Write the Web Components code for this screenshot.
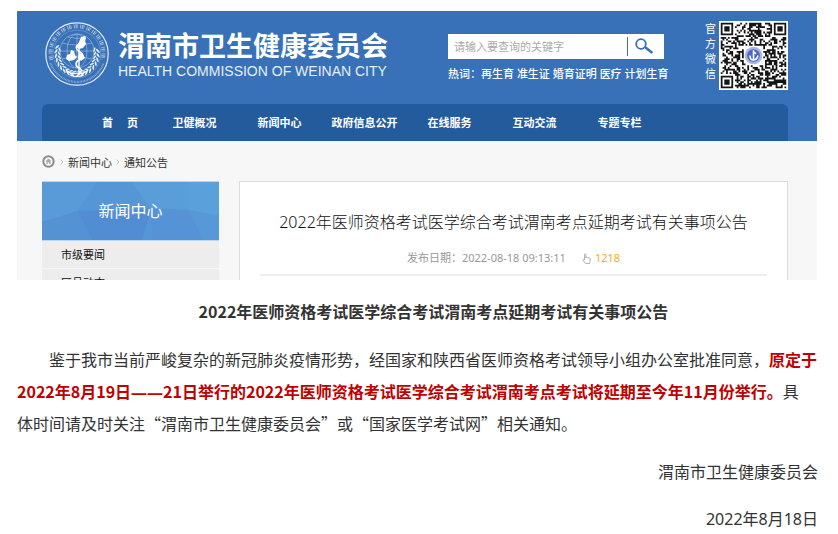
<!DOCTYPE html>
<html lang="zh-CN">
<head>
<meta charset="utf-8">
<title>渭南市卫生健康委员会</title>
<style>
    body {
        margin: 0;
        padding: 11px 20px 0 17px;
        background: #fff;
        color: #333;
        font-family: "Noto Sans CJK SC", sans-serif;
        font-size: 16px;
    }
    .dash {
        font-family: "Noto Sans", sans-serif;
        line-height: 16px;
    }
</style>
</head>
<body>
<site-preview>
    <site-header slot="header">
        <site-brand>
            <span>渭南市卫生健康委员会</span>
            <span slot="sub">HEALTH COMMISSION OF WEINAN CITY</span>
        </site-brand>
        <site-search></site-search>
        <qr-code>官方微信</qr-code>
        <site-nav slot="nav"></site-nav>
    </site-header>
    <bread-crumb></bread-crumb>
    <side-menu slot="side" heading="新闻中心"></side-menu>
    <article-card slot="main">
        2022年医师资格考试医学综合考试渭南考点延期考试有关事项公告
        <span slot="date">发布日期：2022-08-18 09:13:11</span>
        <span slot="hits">1218</span>
    </article-card>
</site-preview>
<notice-article>
    <span slot="title">2022年医师资格考试医学综合考试渭南考点延期考试有关事项公告</span>
    鉴于我市当前严峻复杂的新冠肺炎疫情形势，经国家和陕西省医师资格考试领导小组办公室批准同意，<notice-mark>原定于<br>2022年8月19日<span class="dash">——</span>21日举行的2022年医师资格考试医学综合考试渭南考点考试将延期至今年11月份举行。</notice-mark>具<br>体时间请及时关注“渭南市卫生健康委员会”或“国家医学考试网”相关通知。
    <span slot="org">渭南市卫生健康委员会</span>
    <span slot="date">2022年8月18日</span>
</notice-article>

<script>
class BaseElement extends HTMLElement {
    constructor() {
        super();
        this.attachShadow({ mode: 'open' });
    }

    connectedCallback() {
        this.shadowRoot.innerHTML = this.render();
    }
}

class SitePreview extends BaseElement {
    render() {
        return `
            <style>
                :host {
                    display: block;
                    height: 269px;
                    margin-right: 1px;
                    overflow: hidden;
                    background: #f7f7f7;
                    font-family: "Noto Sans", "Noto Sans CJK SC", sans-serif;
                    font-size: 11px;
                }
                .body {
                    padding: 0 29px 0 25px;
                }
                .columns {
                    display: grid;
                    grid-template-columns: 177px 1fr;
                    gap: 20px;
                }
            </style>
            <slot name="header"></slot>
            <div class="body">
                <slot></slot>
                <div class="columns">
                    <slot name="side"></slot>
                    <slot name="main"></slot>
                </div>
            </div>
        `;
    }
}

class SiteHeader extends BaseElement {
    render() {
        return `
            <style>
                :host {
                    display: block;
                    padding: 0 29px 0 25px;
                    background: #3871b7;
                    color: #fff;
                }
                .top {
                    display: grid;
                    grid-template-columns: 1fr 222px 118px;
                    height: 93px;
                    align-items: start;
                }
            </style>
            <header>
                <div class="top"><slot></slot></div>
                <slot name="nav"></slot>
            </header>
        `;
    }
}

class SiteBrand extends BaseElement {
    // laurel leaves along both sides of the globe
    leaves() {
        let out = '';
        for (let i = 0; i < 9; i++) {
            const deg = 8 + i * 12;
            for (const side of [-1, 1]) {
                out += `<g transform="rotate(${side * deg} 32 32)">
                    <ellipse cx="30" cy="53" rx="2.600" ry=".9" transform="rotate(${side * 30} 30 53)"/>
                    <ellipse cx="32" cy="50" rx="2.400" ry=".8" transform="rotate(${side * -30} 32 50)"/>
                </g>`;
            }
        }
        return out;
    }

    render() {
        return `
            <style>
                :host {
                    display: flex;
                    gap: 9px;
                    padding: 11px 0 0 3px;
                }
                svg {
                    width: 64px;
                    height: 64px;
                    flex: none;
                }
                .name {
                    padding-top: 7px;
                    white-space: nowrap;
                }
                .zh {
                    font-size: 27px;
                    line-height: 34px;
                    font-weight: 700;
                }
                .en {
                    font-family: "Liberation Sans", Arial, sans-serif;
                    font-size: 14px;
                    line-height: 16px;
                    color: #e6eef8;
                }
            </style>
            <svg viewBox="0 0 64 64" fill="none" stroke="#e4edf8" aria-hidden="true">
                <circle cx="32" cy="32" r="31.200" stroke-width="1.200"/>
                <circle cx="32" cy="32" r="23.800" stroke-width=".5" opacity=".5"/>
                <path d="M6.500 38A26.500 26.500 0 1 1 57.500 38" stroke-width="4" stroke-dasharray="1 .8 1.300 .5 .7 2.200" opacity=".6"/>
                <path d="M5.500 41A28 28 0 0 0 58.500 41" stroke-width="2" stroke-dasharray=".8 .7" opacity=".5"/>
                <g stroke-width=".6" opacity=".65">
                    <circle cx="32" cy="29" r="17"/>
                    <ellipse cx="32" cy="29" rx="10" ry="17"/>
                    <path d="M15 29h34M17 21q15 4 30 0M17 37q15-4 30 0M23 15q9 3 18 0M32 12v34"/>
                </g>
                <g fill="#e4edf8" stroke="none">
                    ${this.leaves()}
                </g>
                <g fill="#fff" stroke="none">
                    <path d="M34 20l2-5 4-1 1 2-1 3 1 3-3 4-4 1-3-2z"/>
                    <path d="M22 33l3-1 1-4 3 1 1 4 2 2-3 3-5 1-3-2z"/>
                    <path d="M34 31l4 1 2 4-4 3-3-3z"/>
                </g>
                <path d="M34 21v32" stroke="#fff" stroke-width="1.400"/>
                <path d="M35 22c-6 2-4 6 0 8s3 6-1 8-4 6 0 8 2 4-1 6" stroke="#fff" stroke-width="1.500"/>
                <path d="M21 48q5 5 11 3q6 2 11-3M25 53q7 3 14 0" stroke="#fff" stroke-width="1.100"/>
            </svg>
            <div class="name">
                <div class="zh"><slot></slot></div>
                <div class="en"><slot name="sub"></slot></div>
            </div>
        `;
    }
}

class SiteSearch extends BaseElement {
    render() {
        const words = ['再生育', '准生证', '婚育证明', '医疗', '计划生育'];
        return `
            <style>
                :host {
                    display: block;
                    padding-top: 23px;
                }
                form {
                    display: flex;
                    align-items: center;
                    width: 216px;
                    height: 25px;
                    background: #fff;
                }
                input {
                    flex: 1;
                    min-width: 0;
                    height: 19px;
                    box-sizing: border-box;
                    padding: 0 6px;
                    border: 0;
                    border-right: 1px solid #3871b7;
                    background: none;
                    font: inherit;
                    outline: none;
                }
                input::placeholder {
                    color: #aaa;
                }
                button {
                    width: 36px;
                    height: 25px;
                    padding: 0 4px 2px 0;
                    border: 0;
                    background: none;
                    cursor: pointer;
                }
                svg {
                    display: block;
                    margin: auto;
                }
                p {
                    margin: 7px 0 0;
                    line-height: 16px;
                    font-weight: 500;
                    white-space: nowrap;
                }
                a {
                    color: inherit;
                    text-decoration: none;
                }
            </style>
            <form>
                <input type="text" placeholder="请输入要查询的关键字" aria-label="请输入要查询的关键字">
                <button type="button" aria-label="搜索">
                    <svg width="18" height="16" viewBox="0 0 18 16" fill="none" stroke="#3871b7">
                        <circle cx="6" cy="6" r="4.800" stroke-width="1.800"/>
                        <path d="M9.500 8.800l2 1.300" stroke-width="2"/>
                        <path d="M11.500 10.200l5 4" stroke-width="2.600" stroke-linecap="round"/>
                    </svg>
                </button>
            </form>
            <p>热词：${words.map(word => `<a href="#">${word}</a>`).join(' ')}</p>
        `;
    }
}

class QrCode extends BaseElement {
    modules() {
        const size = 37;
        const finders = [[0, 0], [size - 7, 0], [0, size - 7]];
        let seed = 29;
        let path = '';
        for (let y = 0; y < size; y++) {
            for (let x = 0; x < size; x++) {
                seed = (seed * 1103515245 + 12345) % 2147483648;
                const inFinder = finders.some(([fx, fy]) => x >= fx - 1 && x <= fx + 7 && y >= fy - 1 && y <= fy + 7);
                const inLogo = Math.hypot(x - 18, y - 18) < 6;
                if (!inFinder && !inLogo && seed / 2147483648 < 0.52) {
                    path += `M${x} ${y}h1v1h-1z`;
                }
            }
        }
        for (const [x, y] of finders) {
            path += `M${x} ${y}h7v7h-7zM${x + 1} ${y + 1}v5h5v-5zM${x + 2} ${y + 2}h3v3h-3z`;
        }
        return path;
    }

    render() {
        return `
            <style>
                :host {
                    display: flex;
                    justify-content: flex-end;
                    gap: 3px;
                    padding-top: 10px;
                    line-height: 15px;
                }
                .label {
                    width: 11px;
                    word-break: break-all;
                }
                svg {
                    width: 69px;
                    height: 69px;
                    background: #fff;
                }
            </style>
            <div class="label"><slot></slot></div>
            <svg viewBox="-1 -1 39 39" role="img" aria-label="二维码">
                <path d="${this.modules()}" fill="#151515"/>
                <circle cx="18.500" cy="18.500" r="5" fill="#a9b7e6"/>
                <circle cx="18.500" cy="18.500" r="3.600" fill="#4a66be"/>
                <path d="M18.500 15.500v5M16.500 18.500q0 2.500 2 2.500t2.500-2.500M18.500 16.500l1.500 1" fill="none" stroke="#fff" stroke-width=".9"/>
            </svg>
        `;
    }
}

class SiteNav extends BaseElement {
    render() {
        const items = ['首　&nbsp;页', '卫健概况', '新闻中心', '政府信息公开', '在线服务', '互动交流', '专题专栏'];
        return `
            <style>
                :host {
                    display: block;
                    padding-left: 46px;
                    border-radius: 6px 6px 0 0;
                    background: #235b9c;
                }
                nav {
                    display: flex;
                }
                a {
                    width: 85px;
                    line-height: 37px;
                    color: #fff;
                    font-weight: 700;
                    text-align: center;
                    text-decoration: none;
                    white-space: nowrap;
                }
                a:first-child {
                    width: 64px;
                }
            </style>
            <nav>${items.map(item => `<a href="#">${item}</a>`).join('')}</nav>
        `;
    }
}

class BreadCrumb extends BaseElement {
    render() {
        const arrow = `
            <svg width="4" height="6" viewBox="0 0 4 6" fill="none" stroke="#ccc" aria-hidden="true">
                <path d="M.5.500L3 3 .5 5.500"/>
            </svg>`;
        return `
            <style>
                :host {
                    display: block;
                }
                nav {
                    display: flex;
                    align-items: center;
                    gap: 4px;
                    height: 40px;
                    padding-top: 1px;
                    box-sizing: border-box;
                }
                a {
                    color: #333;
                    text-decoration: none;
                }
                .home {
                    display: flex;
                    padding-right: 1px;
                }
            </style>
            <nav>
                <a class="home" href="#" aria-label="首页">
                    <svg width="13" height="13" viewBox="0 0 13 13" fill="none">
                        <circle cx="6.500" cy="6.500" r="5.200" fill="#f7f7f7" stroke="#8d8d8d" stroke-width="2"/>
                        <path d="M6.500 3.500L3.500 6.300h1v2.700h1.300V7.500h1.400V9h1.300V6.300h1z" fill="#aaa"/>
                    </svg>
                </a>
                ${arrow}
                <a href="#">新闻中心</a>
                ${arrow}
                <a href="#">通知公告</a>
            </nav>
        `;
    }
}

class SideMenu extends BaseElement {
    render() {
        return `
            <style>
                :host {
                    display: block;
                }
                .heading {
                    display: grid;
                    height: 60px;
                    box-sizing: border-box;
                    border: 1px solid #b9d6ee;
                    border-width: 1px 0;
                }
                .heading > * {
                    grid-area: 1 / 1;
                }
                svg {
                    width: 100%;
                    height: 58px;
                }
                h2 {
                    margin: 0;
                    place-self: center;
                    font-size: 16px;
                    font-weight: 400;
                    line-height: 24px;
                    color: #fff;
                }
                ul {
                    margin: 0;
                    padding: 0;
                    list-style: none;
                }
                li {
                    margin-bottom: 1px;
                    padding-left: 19px;
                    background: #ededed;
                    line-height: 27px;
                }
                a {
                    color: #111;
                    text-decoration: none;
                }
            </style>
            <div class="heading">
                <svg viewBox="0 0 177 58" preserveAspectRatio="none" aria-hidden="true">
                    <path d="M0 0h177v58H0z" fill="#5596d6"/>
                    <path d="M0 0h55L36 29 0 40z" fill="#589bd8"/>
                    <path d="M90 0h57v28l-38-1z" fill="#599dd9"/>
                    <path d="M147 0h30v34l-30-6z" fill="#5aa0da"/>
                    <path d="M36 29l73-2-9 31H50z" fill="#528dd4"/>
                    <path d="M109 27l38 1 14 30h-50z" fill="#5592d6"/>
                    <path d="M0 40l36-11 14 29H0z" fill="#5492d4"/>
                    <path d="M147 28l30 6v24h-16z" fill="#5898d8"/>
                </svg>
                <h2>${this.getAttribute('heading')}</h2>
            </div>
            <ul>
                <li><a href="#">市级要闻</a></li>
                <li><a href="#">区县动态</a></li>
            </ul>
        `;
    }
}

class ArticleCard extends BaseElement {
    render() {
        return `
            <style>
                :host {
                    display: block;
                    padding: 24px 20px 0;
                    border: 1px solid #ddd;
                    background: #fff;
                }
                h1 {
                    margin: 0;
                    font-size: 16px;
                    font-weight: 300;
                    line-height: 32px;
                    text-align: center;
                    color: #111;
                }
                .meta {
                    display: flex;
                    align-items: center;
                    justify-content: center;
                    gap: 4px;
                    padding: 12px 0 8px;
                    line-height: 16px;
                    color: #999;
                    border-bottom: 2px solid #eee;
                }
                svg {
                    margin-left: 12px;
                }
                .hits {
                    color: #ffa81f;
                }
            </style>
            <h1><slot></slot></h1>
            <div class="meta">
                <slot name="date"></slot>
                <svg width="9" height="11" viewBox="0 0 9 11" fill="none" stroke="#aaa" stroke-width=".9" aria-hidden="true">
                    <path d="M2.500 7V1.200q.7-1 1.400 0V5l.3-.8q.8-.4 1.200.3l.3.300q.7-.4 1.200.3.900-.2 1.300.4V8L7.500 10.500h-4L.8 7q.5-1 1.700 0z"/>
                </svg>
                <span class="hits"><slot name="hits"></slot></span>
            </div>
        `;
    }
}

class NoticeArticle extends BaseElement {
    render() {
        return `
            <style>
                :host {
                    display: block;
                    padding-top: 15px;
                    line-height: 32px;
                }
                h2, p {
                    margin: 0 0 16px;
                    font-size: 16px;
                    text-indent: 2em;
                }
                h2 {
                    text-align: center;
                }
                .sign {
                    text-align: right;
                }
                .date {
                    margin-bottom: 0;
                    font-family: "Noto Sans", "Noto Sans CJK SC", sans-serif;
                }
            </style>
            <article>
                <h2><slot name="title"></slot></h2>
                <p><slot></slot></p>
                <p class="sign"><slot name="org"></slot></p>
                <p class="sign date"><slot name="date"></slot></p>
            </article>
        `;
    }
}

class NoticeMark extends BaseElement {
    // kept on one line: any space here would show up inside the sentence
    render() {
        return '<style>:host { display: inline; } strong { color: #c00000; }</style><strong><slot></slot></strong>';
    }
}

customElements.define('site-preview', SitePreview);
customElements.define('site-header', SiteHeader);
customElements.define('site-brand', SiteBrand);
customElements.define('site-search', SiteSearch);
customElements.define('qr-code', QrCode);
customElements.define('site-nav', SiteNav);
customElements.define('bread-crumb', BreadCrumb);
customElements.define('side-menu', SideMenu);
customElements.define('article-card', ArticleCard);
customElements.define('notice-article', NoticeArticle);
customElements.define('notice-mark', NoticeMark);
</script>
</body>
</html>
